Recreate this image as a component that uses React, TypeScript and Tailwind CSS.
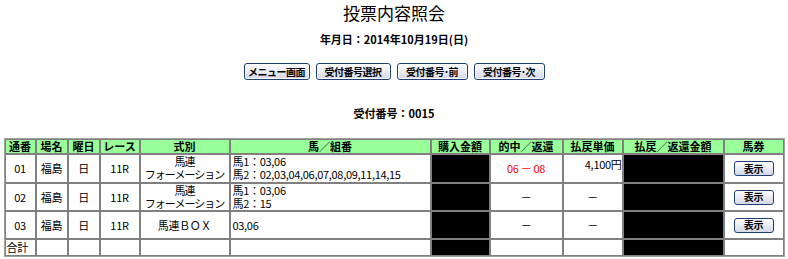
const font = { fontFamily: '"Noto Sans CJK JP", "MS UI Gothic", sans-serif' };

function NavButton({ label, width }: { label: string; width: string }) {
  return (
    <button
      className={`h-[17px] ${width} whitespace-nowrap rounded-[3px] border border-[#1f3f74] bg-gradient-to-b from-white to-[#d3d8e8] px-0 text-[10px] leading-none font-bold tracking-[-0.5px] text-black shadow-[inset_0_0_0_1px_#ffffff]`}
    >
      {label}
    </button>
  );
}

function ShowButton() {
  return (
    <button className="h-[15px] w-[40px] rounded-[3px] border border-[#1f3f74] bg-gradient-to-b from-white to-[#d3d8e8] text-[10px] leading-none font-bold text-black">
      表示
    </button>
  );
}

const th = "border border-[#808080] bg-[#99ff99] text-[11px] font-bold leading-[13px] text-center whitespace-nowrap overflow-hidden";
const td = "border border-[#808080] text-[11px] leading-[13px] tracking-[-0.3px] whitespace-nowrap overflow-hidden";

const rows = [
  {
    no: "01",
    kind: ["馬連", "フォーメーション"],
    horses: ["馬1：03,06", "馬2：02,03,04,06,07,08,09,11,14,15"],
    hit: "06 － 08",
    price: "4,100円",
    h: "h-[29px]",
  },
  {
    no: "02",
    kind: ["馬連", "フォーメーション"],
    horses: ["馬1：03,06", "馬2：15"],
    hit: "－",
    price: "－",
    h: "h-[28px]",
  },
  {
    no: "03",
    kind: ["馬連ＢＯＸ"],
    horses: ["03,06"],
    hit: "－",
    price: "－",
    h: "h-[28px]",
  },
];

export default function App() {
  return (
    <main className="flex h-[259px] w-[788px] flex-col items-center overflow-hidden bg-white text-black" style={font}>
      <h1 className="text-[17px] leading-[25px]">投票内容照会</h1>
      <p className="mt-[7px] text-[11px] font-bold leading-[14px]">年月日：2014年10月19日(日)</p>
      <div className="mt-[17px] flex gap-[6px]">
        <NavButton label="メニュー画面" width="w-[66px]" />
        <NavButton label="受付番号選択" width="w-[75px]" />
        <NavButton label="受付番号･前" width="w-[71px]" />
        <NavButton label="受付番号･次" width="w-[71px]" />
      </div>
      <p className="mt-[26px] text-[11px] font-bold leading-[14px]">受付番号：0015</p>
      <table className="mt-[18px] w-[780px] table-fixed border-separate border-spacing-0 border border-[#a0a0a0]">
        <colgroup>
          <col className="w-[31px]" />
          <col className="w-[32px]" />
          <col className="w-[32px]" />
          <col className="w-[40px]" />
          <col className="w-[90px]" />
          <col className="w-[201px]" />
          <col className="w-[59px]" />
          <col className="w-[73px]" />
          <col className="w-[60px]" />
          <col className="w-[101px]" />
          <col className="w-[60px]" />
        </colgroup>
        <thead>
          <tr className="h-[15px]">
            <th className={th}>通番</th>
            <th className={th}>場名</th>
            <th className={th}>曜日</th>
            <th className={th}>レース</th>
            <th className={th}>式別</th>
            <th className={th}>馬／組番</th>
            <th className={th}>購入金額</th>
            <th className={th}>的中／返還</th>
            <th className={th}>払戻単価</th>
            <th className={th}>払戻／返還金額</th>
            <th className={th}>馬券</th>
          </tr>
        </thead>
        <tbody>
          {rows.map((r) => (
            <tr key={r.no} className={r.h}>
              <td className={`${td} text-center`}>{r.no}</td>
              <td className={`${td} text-center`}>福島</td>
              <td className={`${td} text-center`}>日</td>
              <td className={`${td} text-center`}>11R</td>
              <td className={`${td} text-center align-top`}>
                {r.kind.length === 1 ? (
                  <div className="pt-[7px]">{r.kind[0]}</div>
                ) : (
                  r.kind.map((k) => (
                    <div key={k} className="tracking-[-1px]">
                      {k}
                    </div>
                  ))
                )}
              </td>
              <td className={`${td} px-[2px] align-top`}>
                {r.horses.length === 1 ? (
                  <div className="pt-[7px]">{r.horses[0]}</div>
                ) : (
                  r.horses.map((k) => <div key={k}>{k}</div>)
                )}
              </td>
              <td className={`${td} bg-black`}></td>
              <td className={`${td} text-center ${r.hit === "－" ? "" : "text-[#ff0000]"}`}>{r.hit}</td>
              <td className={`${td} ${r.price === "－" ? "text-center" : "pt-[3px] text-right align-top"}`}>{r.price}</td>
              <td className={`${td} bg-black`}></td>
              <td className={`${td} text-center`}>
                <ShowButton />
              </td>
            </tr>
          ))}
          <tr className="h-[17px]">
            <td className={`${td} px-[1px]`}>合計</td>
            <td className={td}></td>
            <td className={td}></td>
            <td className={td}></td>
            <td className={td}></td>
            <td className={td}></td>
            <td className={`${td} bg-black`}></td>
            <td className={td}></td>
            <td className={td}></td>
            <td className={`${td} bg-black`}></td>
            <td className={td}></td>
          </tr>
        </tbody>
      </table>
    </main>
  );
}
